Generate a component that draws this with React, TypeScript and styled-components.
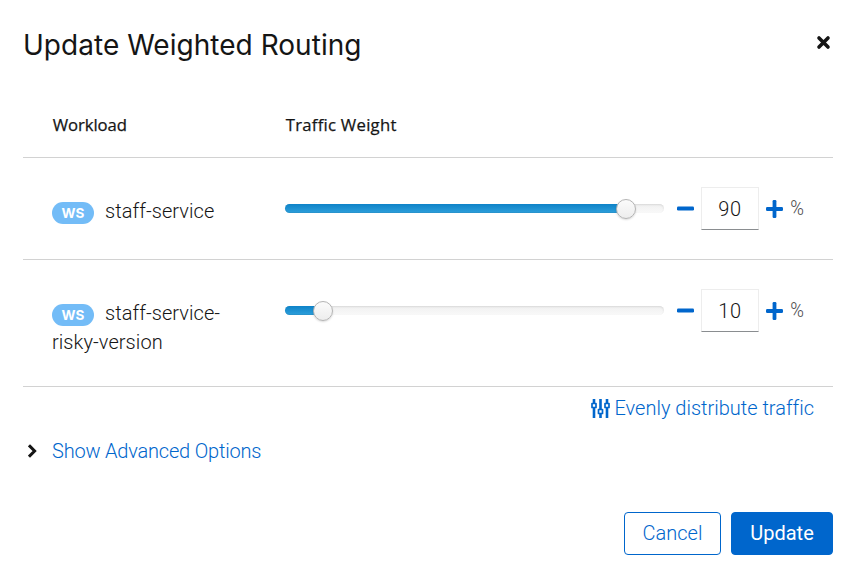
import React, { useState } from "react";
import styled, { createGlobalStyle } from "styled-components";

const GlobalStyle = createGlobalStyle`
  * { box-sizing: border-box; }
  body { margin: 0; background: #fff; }
  button, input { font: inherit; color: inherit; }
`;

const Dialog = styled.main`
  width: 856px;
  height: 573px;
  padding: 23px 23px 18px;
  display: flex;
  flex-direction: column;
  background: #fff;
  color: #151515;
  font: 300 20px/29px Roboto, "Open Sans", sans-serif;
  font-variant-ligatures: none;
`;

const Header = styled.header`
  height: 70px;
  display: flex;
  justify-content: space-between;
  align-items: flex-start;
`;

const Title = styled.h1`
  margin: 4px 0 0;
  font: 400 28px/36px Inter, sans-serif;
  letter-spacing: 0.03px;
`;

const IconButton = styled.button`
  display: flex;
  align-items: center;
  padding: 0;
  border: 0;
  background: none;
  color: #06c;
`;

const CloseButton = styled(IconButton)`
  margin: 12px 2px 0 0;
  color: #151515;
`;

const Row = styled.div<{ $height: number }>`
  display: grid;
  grid-template-columns: 233px 1fr;
  height: ${(p) => p.$height}px;
  padding-left: 29px;
  border-bottom: 1px solid #d2d2d2;
`;

const HeadCell = styled.div<{ $spacing: number }>`
  padding: 17px 0 0 0.8px;
  font: 500 16.7px/29px "Open Sans", sans-serif;
  letter-spacing: ${(p) => p.$spacing}px;
  -webkit-text-stroke: 0.25px #151515;
`;

const Workload = styled.div`
  width: 190px;
  padding-top: 39px;
  line-height: 29px;
  letter-spacing: 0.07px;
`;

const Badge = styled.span`
  display: inline-block;
  width: 42px;
  height: 22px;
  margin-right: 11px;
  border-radius: 11px;
  background: #73bcf7;
  color: #fff;
  font: 700 13.5px/22px Inter, sans-serif;
  text-align: center;
  vertical-align: 0;
`;

const Controls = styled.div`
  display: flex;
  align-items: center;
  height: 43px;
  margin-top: 29px;
`;

const Track = styled.div`
  position: relative;
  width: 379px;
  height: 9px;
  margin-right: 13px;
  border-radius: 5px;
  background: linear-gradient(#f0f0f0, #f9f9f9);
  box-shadow: inset 0 1px 2px rgba(0, 0, 0, 0.1);
`;

const Fill = styled.div`
  height: 100%;
  border-radius: 5px;
  background: linear-gradient(#0e83c8, #2d9fdb);
  box-shadow: inset 0 -1px 0 rgba(0, 0, 0, 0.06);
`;

const Thumb = styled.div`
  position: absolute;
  top: -5.5px;
  width: 20px;
  height: 20px;
  margin-left: -10px;
  border: 1px solid #b4b4b4;
  border-radius: 50%;
  background: linear-gradient(#fbfbfb, #ededed);
  box-shadow: 0 1px 2px rgba(0, 0, 0, 0.15);
`;

const WeightInput = styled.input`
  width: 58px;
  height: 43px;
  margin: 0 7px;
  padding: 0;
  border: 1px solid #ededed;
  border-bottom-color: #8a8d90;
  border-radius: 0;
  background: #fff;
  font: 300 20px/29px Roboto, sans-serif;
  letter-spacing: 0.6px;
  text-align: center;
`;

const Percent = styled.span`
  margin-left: 7px;
  font-size: 19.5px;
  color: #4b4b4b;
  transform: scaleX(0.95);
`;

const Distribute = styled.div`
  display: flex;
  justify-content: flex-end;
  height: 42px;
  padding: 7px 19px 0 0;
`;

const LinkButton = styled(IconButton)<{ $spacing?: number }>`
  height: 29px;
  letter-spacing: ${(p) => p.$spacing ?? 0}px;

  svg { margin-right: 4px; }
`;

const Advanced = styled.div`
  display: flex;
  align-items: center;
  height: 44px;
  padding-left: 5px;
  gap: 15px;
`;

const Footer = styled.footer`
  display: flex;
  justify-content: flex-end;
  gap: 10px;
  margin-top: auto;
`;

const Button = styled.button<{ $primary?: boolean }>`
  width: ${(p) => (p.$primary ? 102 : 97)}px;
  height: 43px;
  padding: 0;
  border: 1px solid #06c;
  border-radius: 4px;
  background: ${(p) => (p.$primary ? "#06c" : "#fff")};
  color: ${(p) => (p.$primary ? "#fff" : "#06c")};
  font-weight: ${(p) => (p.$primary ? 400 : 300)};
`;

const MinusIcon = () => (
  <svg width="17" height="17" viewBox="0 0 17 17">
    <rect y="6.6" width="17" height="3.8" rx="1.2" fill="currentColor" />
  </svg>
);

const PlusIcon = () => (
  <svg width="17" height="18" viewBox="0 0 17 18">
    <rect y="7.1" width="17" height="3.8" rx="1.2" fill="currentColor" />
    <rect x="6.6" y="0" width="3.8" height="18" rx="1.2" fill="currentColor" />
  </svg>
);

const CloseIcon = () => (
  <svg width="15" height="15" viewBox="0 0 15 15">
    <path d="M3 3 12 12M12 3 3 12" stroke="currentColor" strokeWidth="3.6" strokeLinecap="round" />
  </svg>
);

const ChevronIcon = () => (
  <svg width="9" height="14" viewBox="0 0 9 14">
    <path d="M2 2.4 6.6 7 2 11.6" fill="none" stroke="#151515" strokeWidth="3" strokeLinecap="square" />
  </svg>
);

const SlidersIcon = () => (
  <svg width="19" height="19" viewBox="0 0 19 19" fill="none" stroke="currentColor">
    <path d="M3 0v4M3 9v10M9.5 0v10M9.5 15v4M16 0v4M16 9v10" strokeWidth="2.6" />
    <path d="M1 4.5h4v4H1zM7.5 10.5h4v4h-4zM14 4.5h4v4h-4z" strokeWidth="1.7" strokeLinejoin="round" />
  </svg>
);

const workloads = [
  { name: "staff-service", weight: 90, height: 102 },
  { name: "staff-service-risky-version", weight: 10, height: 127 },
];

export default function App() {
  const [weights, setWeights] = useState(workloads.map((w) => w.weight));
  const update = (index: number, value: number) => {
    const next = Math.min(100, Math.max(0, value || 0));
    setWeights(index === 0 ? [next, 100 - next] : [100 - next, next]);
  };

  return (
    <>
      <GlobalStyle />
      <Dialog>
        <Header>
          <Title>Update Weighted Routing</Title>
          <CloseButton aria-label="Close"><CloseIcon /></CloseButton>
        </Header>

        <Row $height={65}>
          <HeadCell $spacing={-0.1}>Workload</HeadCell>
          <HeadCell $spacing={0.25}>Traffic Weight</HeadCell>
        </Row>
        {workloads.map((w, i) => (
          <Row key={w.name} $height={w.height}>
            <Workload><Badge>WS</Badge>{w.name}</Workload>
            <Controls>
              <Track>
                <Fill style={{ width: `${weights[i]}%` }} />
                <Thumb style={{ left: `${weights[i]}%` }} />
              </Track>
              <IconButton aria-label="Decrease" onClick={() => update(i, weights[i] - 1)}><MinusIcon /></IconButton>
              <WeightInput value={weights[i]} onChange={(e) => update(i, Number(e.target.value))} />
              <IconButton aria-label="Increase" onClick={() => update(i, weights[i] + 1)}><PlusIcon /></IconButton>
              <Percent>%</Percent>
            </Controls>
          </Row>
        ))}

        <Distribute>
          <LinkButton onClick={() => setWeights([50, 50])}><SlidersIcon />Evenly distribute traffic</LinkButton>
        </Distribute>
        <Advanced>
          <ChevronIcon />
          <LinkButton $spacing={-0.2}>Show Advanced Options</LinkButton>
        </Advanced>

        <Footer>
          <Button>Cancel</Button>
          <Button $primary>Update</Button>
        </Footer>
      </Dialog>
    </>
  );
}
